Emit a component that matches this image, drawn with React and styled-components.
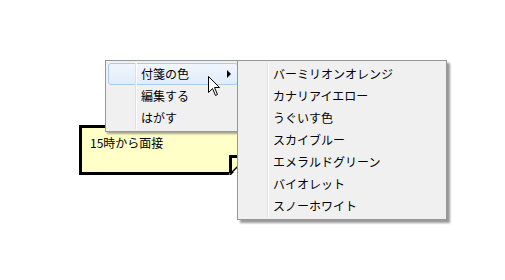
import React from 'react';
import styled, { createGlobalStyle } from 'styled-components';

const GlobalStyle = createGlobalStyle`
  html, body {
    margin: 0;
    padding: 0;
    background: #ffffff;
  }
  body {
    font-family: "Noto Sans CJK JP", "Noto Sans", sans-serif;
    font-size: 12px;
    color: #000;
  }
`;

const colors = ['バーミリオンオレンジ', 'カナリアイエロー', 'うぐいす色', 'スカイブルー', 'エメラルドグリーン', 'バイオレット', 'スノーホワイト'];

const menuItems = [
  { label: '付箋の色', sub: true, active: true },
  { label: '編集する' },
  { label: 'はがす' },
];

const App = () => (
  <>
    <GlobalStyle />
    <Desk>
      <Note>
        15時から面接
        <Fold width="20" height="20" viewBox="0 0 20 20">
          <polygon points="0,0 20,0 0,20" fill="#ffffc8" />
          <polygon points="2,20 20,2 20,20" fill="#ffffff" />
          <polyline points="20,1.5 1.5,1.5 1.5,18.5" fill="none" stroke="#000" strokeWidth="3" />
          <line x1="1.5" y1="18.5" x2="19" y2="1.5" stroke="#000" strokeWidth="1.5" />
        </Fold>
      </Note>

      <Menu>
        {menuItems.map((item) => (
          <MenuItem key={item.label} $active={item.active}>
            <Gutter />
            <Label>{item.label}</Label>
            {item.sub && <Arrow />}
          </MenuItem>
        ))}
      </Menu>

      <SubMenu>
        {colors.map((c) => (
          <MenuItem key={c}>
            <Gutter />
            <Label>{c}</Label>
          </MenuItem>
        ))}
      </SubMenu>

      <Cursor width="13" height="21" viewBox="0 0 13 21">
        <path
          d="M0.5 0.5 L0.5 16.5 L4.5 12.5 L7.5 19.5 L9.5 18.5 L6.5 11.5 L11.5 11.5 Z"
          fill="#fff"
          stroke="#000"
          strokeWidth="1"
        />
      </Cursor>
    </Desk>
  </>
);

export default App;

// Styled Components
const Desk = styled.div`
  position: relative;
  width: 505px;
  height: 280px;
  overflow: hidden;
  padding: 125px 0 0 79px;
  box-sizing: border-box;
`;

const Note = styled.div`
  position: relative;
  width: 170px;
  height: 50px;
  box-sizing: border-box;
  border: 3px solid #000;
  background: #ffffc8;
  padding: 6px 0 0 8px;
  line-height: 17px;
`;

const Fold = styled.svg`
  position: absolute;
  right: -3px;
  bottom: -3px;
`;

const Menu = styled.div`
  position: absolute;
  left: 105px;
  top: 60px;
  width: 136px;
  box-sizing: border-box;
  padding: 2px;
  background: #f0f0f0;
  border: 1px solid #979797;
  box-shadow: 2px 2px 2px rgba(0, 0, 0, 0.35);
`;

const SubMenu = styled(Menu)`
  left: 237px;
  width: 210px;
  box-shadow: 3px 3px 2px rgba(0, 0, 0, 0.4);
`;

const MenuItem = styled.div`
  position: relative;
  display: flex;
  align-items: center;
  height: 22px;
  box-sizing: border-box;
  border: 1px solid ${(p) => (p.$active ? '#a9cbf3' : 'transparent')};
  border-radius: 3px;
  background: ${(p) => (p.$active ? 'linear-gradient(#f1f6fd, #e2ecf9)' : 'transparent')};
`;

const Gutter = styled.div`
  align-self: stretch;
  width: 26px;
  margin: -1px 5px -1px 0;
  flex-shrink: 0;
  border-right: 1px solid #e0e0e0;
  box-shadow: 1px 0 0 #ffffff;
`;

const Label = styled.span`
  flex: 1;
  white-space: nowrap;
  line-height: 20px;
`;

const Arrow = styled.span`
  width: 0;
  height: 0;
  margin-right: 6px;
  border-top: 4px solid transparent;
  border-bottom: 4px solid transparent;
  border-left: 4px solid #000;
`;

const Cursor = styled.svg`
  position: absolute;
  left: 208px;
  top: 76px;
`;
